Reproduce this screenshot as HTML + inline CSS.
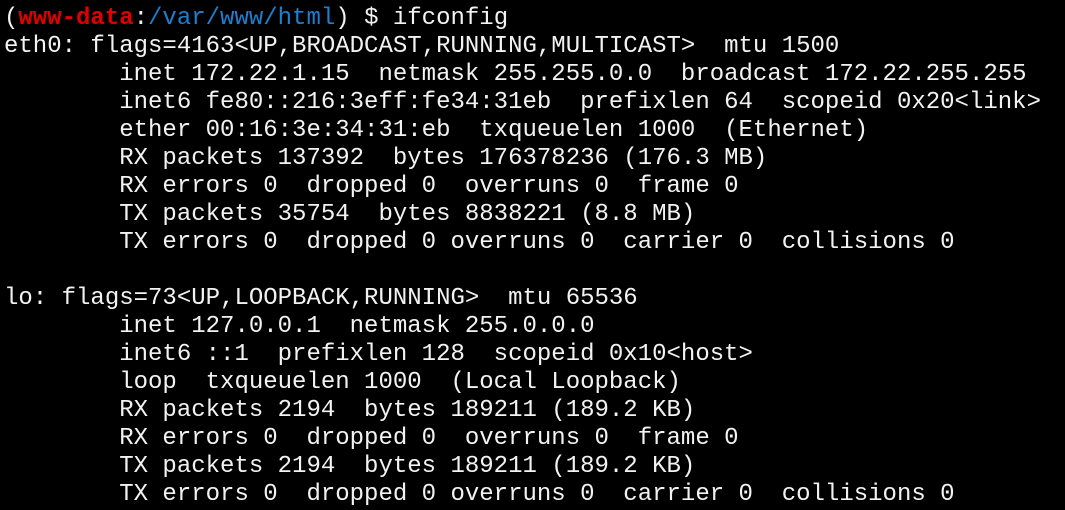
<!DOCTYPE html>
<html><head><style>
html,body{margin:0;padding:0;background:#000;width:1065px;height:510px;overflow:hidden}
pre{margin:0;padding:5px 0 0 4px;font-family:"Courier New","Nimbus Mono PS","Liberation Mono",monospace;font-size:24px;line-height:28px;color:#f2f2f2}
.r{color:#e00000;font-weight:bold}.b{color:#1e7fd0}
</style></head><body><pre>(<span class="r">www-data</span>:<span class="b">/var/www/html</span>) $ ifconfig
eth0: flags=4163&lt;UP,BROADCAST,RUNNING,MULTICAST&gt;  mtu 1500
        inet 172.22.1.15  netmask 255.255.0.0  broadcast 172.22.255.255
        inet6 fe80::216:3eff:fe34:31eb  prefixlen 64  scopeid 0x20&lt;link&gt;
        ether 00:16:3e:34:31:eb  txqueuelen 1000  (Ethernet)
        RX packets 137392  bytes 176378236 (176.3 MB)
        RX errors 0  dropped 0  overruns 0  frame 0
        TX packets 35754  bytes 8838221 (8.8 MB)
        TX errors 0  dropped 0 overruns 0  carrier 0  collisions 0

lo: flags=73&lt;UP,LOOPBACK,RUNNING&gt;  mtu 65536
        inet 127.0.0.1  netmask 255.0.0.0
        inet6 ::1  prefixlen 128  scopeid 0x10&lt;host&gt;
        loop  txqueuelen 1000  (Local Loopback)
        RX packets 2194  bytes 189211 (189.2 KB)
        RX errors 0  dropped 0  overruns 0  frame 0
        TX packets 2194  bytes 189211 (189.2 KB)
        TX errors 0  dropped 0 overruns 0  carrier 0  collisions 0</pre></body></html>
